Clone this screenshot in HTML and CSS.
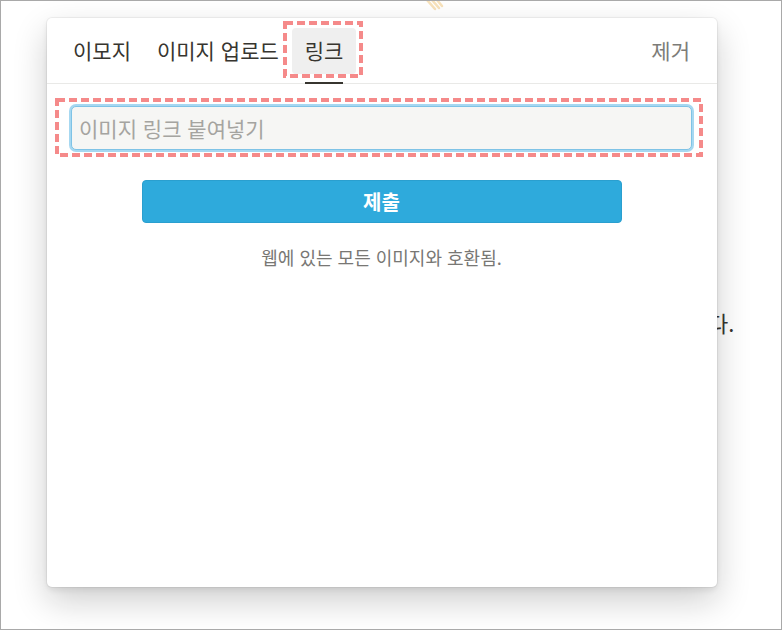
FILE: index.html
```html
<!DOCTYPE html>
<html lang="ko">
<head>
<meta charset="utf-8">
<link rel="stylesheet" href="styles.css">
</head>
<body>
<div class="frame">
  <svg class="peek" width="24" height="12" viewBox="0 0 24 12"><path d="M4 0 L12 9 M9 0 L16 8 M14 0 L19 6" stroke="#f8e2bb" stroke-width="2.5" fill="none" stroke-linecap="round"/></svg>
  <div class="behind">다.</div>
  <div class="popup">
    <div class="tabs">
      <div class="tab">이모지</div>
      <div class="tab">이미지 업로드</div>
      <div class="tab active"><span class="label">링크</span></div>
      <div class="spacer"></div>
      <div class="tab remove">제거</div>
    </div>
    <div class="body">
      <div class="input">이미지 링크 붙여넣기</div>
      <div class="submit">제출</div>
      <div class="note">웹에 있는 모든 이미지와 호환됨.</div>
    </div>
  </div>
  <svg class="mark mark-tab" width="80" height="57" viewBox="0 0 80 57"><rect x="2" y="2" width="76" height="53" fill="none" stroke="#f58a8a" stroke-width="4" stroke-dasharray="8 4"/></svg>
  <svg class="mark mark-input" width="648" height="59" viewBox="0 0 648 59"><rect x="2" y="2" width="644" height="55" fill="none" stroke="#f58a8a" stroke-width="4" stroke-dasharray="8 4"/></svg>
</div>
</body>
</html>
```
FILE: styles.css
```css
html, body {
  margin: 0;
  padding: 0;
  background: #fff;
}
.frame {
  position: relative;
  width: 782px;
  height: 630px;
  box-sizing: border-box;
  border: 1px solid #a9a9a9;
  overflow: hidden;
  font-family: "Noto Sans CJK KR", "Noto Sans", sans-serif;
  color: #37352f;
}
.peek {
  position: absolute;
  left: 422px;
  top: -1px;
}
.behind {
  position: absolute;
  left: 707px;
  top: 305px;
  font-size: 22px;
  color: #37352f;
}
.popup {
  position: absolute;
  left: 46px;
  top: 17px;
  width: 670px;
  height: 569px;
  background: #fff;
  border-radius: 5px;
  box-shadow: 0 0 0 1px rgba(15,15,15,0.05), 0 3px 6px rgba(15,15,15,0.08), 0 14px 34px rgba(15,15,15,0.2);
  display: flex;
  flex-direction: column;
}
.tabs {
  display: flex;
  align-items: center;
  height: 66px;
  padding: 0 14px 0 13px;
  border-bottom: 1px solid #e9e9e7;
  box-sizing: border-box;
}
.tab {
  position: relative;
  height: 46px;
  padding: 0 13px;
  display: flex;
  align-items: center;
  font-size: 21px;
  line-height: 1;
  border-radius: 4px;
  white-space: nowrap;
}
.tab.active {
  background: #efefef;
}
.tab.active .label {
  position: relative;
}
.tab.active .label::after {
  content: "";
  position: absolute;
  left: 0;
  right: 0;
  bottom: -23px;
  height: 2px;
  background: #37352f;
}
.spacer {
  flex: 1;
}
.tab.remove {
  color: #7d7c78;
}
.body {
  display: flex;
  flex-direction: column;
  align-items: center;
  padding: 20px 23px 0 22px;
}
.input {
  align-self: stretch;
  height: 44px;
  box-sizing: border-box;
  margin: 2px;
  border: 1px solid #7fc3e6;
  box-shadow: 0 0 0 2px #a6d8f1;
  border-radius: 5px;
  background: #f6f6f4;
  display: flex;
  align-items: center;
  padding: 0 7px;
  font-size: 21px;
  color: #a5a4a0;
}
.submit {
  margin-top: 28px;
  width: 480px;
  height: 43px;
  box-sizing: border-box;
  border-radius: 4px;
  background: #2eaadc;
  border: 1px solid #2a9fcf;
  color: #fff;
  font-weight: 700;
  font-size: 20px;
  display: flex;
  align-items: center;
  justify-content: center;
}
.note {
  margin-top: 21px;
  font-size: 18px;
  color: #787774;
}
.mark {
  position: absolute;
}
.mark-tab {
  left: 282px;
  top: 20px;
}
.mark-input {
  left: 54px;
  top: 97px;
}
```
